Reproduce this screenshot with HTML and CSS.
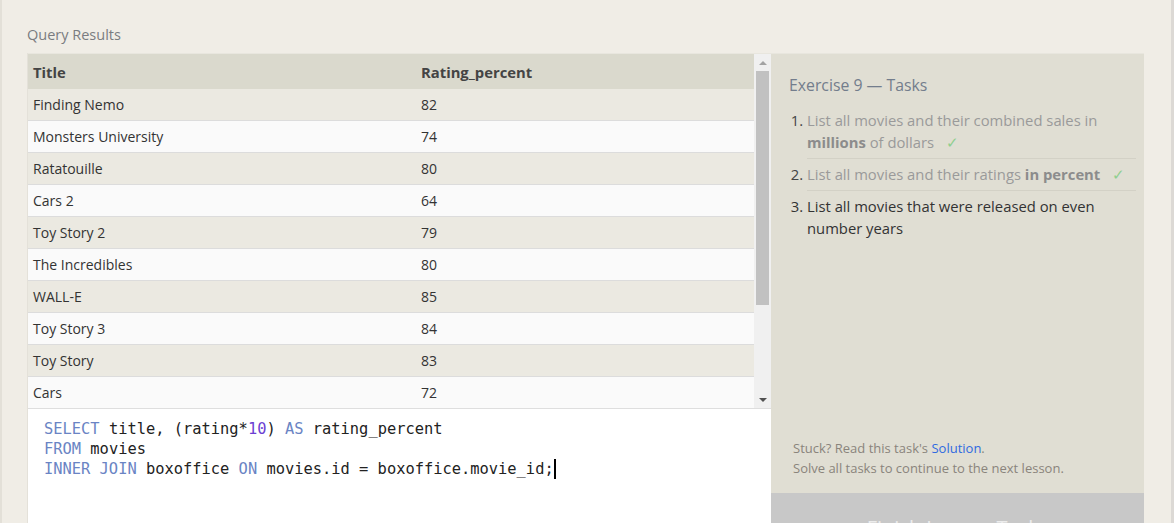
FILE: index.html
```html
<!DOCTYPE html>
<html>
<head>
<meta charset="utf-8">
<link rel="stylesheet" href="styles.css">
</head>
<body>
<div class="page">
  <div class="heading">Query Results</div>
  <div class="workspace">
    <div class="left">
      <div class="results">
        <div class="table-wrap">
          <table class="table">
            <thead>
              <tr><th class="c1">Title</th><th>Rating_percent</th></tr>
            </thead>
            <tbody>
              <tr><td class="c1">Finding Nemo</td><td>82</td></tr>
              <tr><td class="c1">Monsters University</td><td>74</td></tr>
              <tr><td class="c1">Ratatouille</td><td>80</td></tr>
              <tr><td class="c1">Cars 2</td><td>64</td></tr>
              <tr><td class="c1">Toy Story 2</td><td>79</td></tr>
              <tr><td class="c1">The Incredibles</td><td>80</td></tr>
              <tr><td class="c1">WALL-E</td><td>85</td></tr>
              <tr><td class="c1">Toy Story 3</td><td>84</td></tr>
              <tr><td class="c1">Toy Story</td><td>83</td></tr>
              <tr><td class="c1">Cars</td><td>72</td></tr>
              <tr><td class="c1">Up</td><td>83</td></tr>
              <tr><td class="c1">Brave</td><td>72</td></tr>
              <tr><td class="c1">A Bug's Life</td><td>72</td></tr>
              <tr><td class="c1">Monsters, Inc.</td><td>81</td></tr>
            </tbody>
          </table>
        </div>
        <div class="scrollbar">
          <div class="sb-btn"><span class="arrow-up"></span></div>
          <div class="sb-track"><div class="sb-thumb"></div></div>
          <div class="sb-btn"><span class="arrow-down"></span></div>
        </div>
      </div>
      <div class="editor">
        <div class="code-line"><span class="kw">SELECT</span> title, (rating*<span class="num">10</span>) <span class="kw">AS</span> rating_percent</div>
        <div class="code-line"><span class="kw">FROM</span> movies</div>
        <div class="code-line"><span class="kw">INNER JOIN</span> boxoffice <span class="kw">ON</span> movies.id = boxoffice.movie_id;<span class="cursor"></span></div>
      </div>
    </div>
    <div class="right">
      <div class="panel">
        <div class="panel-title">Exercise 9 — Tasks</div>
        <ol class="tasks">
          <li class="done">List all movies and their combined sales in <b>millions</b> of dollars <span class="check">✓</span></li>
          <li class="done">List all movies and their ratings <b>in percent</b> <span class="check">✓</span></li>
          <li class="todo">List all movies that were released on even number years</li>
        </ol>
        <div class="panel-foot">
          <div>Stuck? Read this task's <a class="link">Solution</a>.</div>
          <div>Solve all tasks to continue to the next lesson.</div>
        </div>
      </div>
      <div class="finish">Finish Lesson Tasks</div>
    </div>
  </div>
</div>
</body>
</html>
```

FILE: styles.css
```css
html, body {
  margin: 0;
  padding: 0;
  background: #f0ede6;
  font-family: "Open Sans", "Noto Sans", sans-serif;
}
.page {
  height: 523px;
  overflow: hidden;
  border-left: 2px solid #e3e0d8;
  border-right: 3px solid #dcd9d5;
  padding: 0 27px 0 25px;
  box-sizing: border-box;
}
.heading {
  padding-top: 25px;
  height: 28px;
  line-height: 20px;
  font-size: 14.5px;
  color: #7a7c80;
}
.workspace {
  display: flex;
  height: 470px;
}
.left {
  width: 744px;
  display: flex;
  flex-direction: column;
  border-left: 1px solid #e4e1d9;
  box-sizing: border-box;
}
.results {
  display: flex;
  flex-shrink: 0;
  height: 356px;
  border-top: 1px solid #e8e6de;
  border-bottom: 1px solid #dedede;
  box-sizing: border-box;
}
.table-wrap {
  flex: 1;
  overflow: hidden;
}
.table {
  width: 100%;
  border-collapse: collapse;
  font-size: 14px;
  color: #333;
}
.table th {
  background: #dad9cd;
  height: 35px;
  padding: 0 5px;
  text-align: left;
  font-weight: 700;
  font-size: 14.8px;
  color: #444;
}
.table td {
  height: 31px;
  padding: 0 5px;
  border-bottom: 1px solid #dcdcdc;
}
.table .c1 { width: 378px; }
.table tbody tr:nth-child(odd) td { background: #ebe9e1; }
.table tbody tr:nth-child(even) td { background: #fafafa; }
.scrollbar {
  width: 17px;
  background: #f0f0f0;
  display: flex;
  flex-direction: column;
}
.sb-btn {
  height: 17px;
  display: flex;
  align-items: center;
  justify-content: center;
}
.arrow-up {
  width: 0; height: 0;
  border-left: 4px solid transparent;
  border-right: 4px solid transparent;
  border-bottom: 4px solid #a3a3a3;
}
.arrow-down {
  width: 0; height: 0;
  border-left: 4px solid transparent;
  border-right: 4px solid transparent;
  border-top: 4px solid #505050;
}
.sb-track {
  flex: 1;
  padding: 0 2px;
}
.sb-thumb {
  height: 234px;
  background: #c1c1c1;
}
.editor {
  flex: 1;
  background: #fff;
  padding: 10px 16px 8px 16px;
  font-family: "DejaVu Sans Mono", "Liberation Mono", monospace;
  font-size: 15.4px;
  line-height: 20px;
  color: #222;
}
.code-line {
  white-space: pre;
  height: 20px;
}
.kw { color: #6a84c4; }
.num { color: #6c3fd2; }
.cursor {
  display: inline-block;
  width: 2px;
  height: 20px;
  background: #000;
  vertical-align: top;
}
.right {
  width: 373px;
  display: flex;
  flex-direction: column;
}
.panel {
  flex-shrink: 0;
  height: 440px;
  box-sizing: border-box;
  background: #e0ded3;
  border-top: 1px solid #e8e6de;
  padding: 19px 8px 15px 18px;
  display: flex;
  flex-direction: column;
}
.panel-title {
  font-size: 15.8px;
  line-height: 24px;
  color: #737d8c;
}
.tasks {
  margin: 8px 0 0 0;
  padding-left: 18px;
  font-size: 14.8px;
  line-height: 22px;
  color: #333;
}
.tasks li {
  padding: 4px 0 5px 0;
  border-bottom: 1px solid #d3d1c6;
}
.tasks li:last-child { border-bottom: none; }
.tasks li.done { color: #9a9a9a; }
.tasks li.done::marker { color: #444; }
.tasks li.todo { color: #333; }
.tasks b { color: #8c8c8c; }
.check {
  color: #8fcf8f;
  margin-left: 8px;
}
.panel-foot {
  margin-top: auto;
  padding-left: 4px;
  font-size: 13px;
  line-height: 20px;
  color: #8a847c;
}
.link { color: #2f6ae0; }
.finish {
  flex-shrink: 0;
  height: 60px;
  background: #c8c8c8;
  color: #ececec;
  font-size: 20px;
  text-align: center;
  padding-top: 22px;
  box-sizing: border-box;
  line-height: 26px;
}
```
